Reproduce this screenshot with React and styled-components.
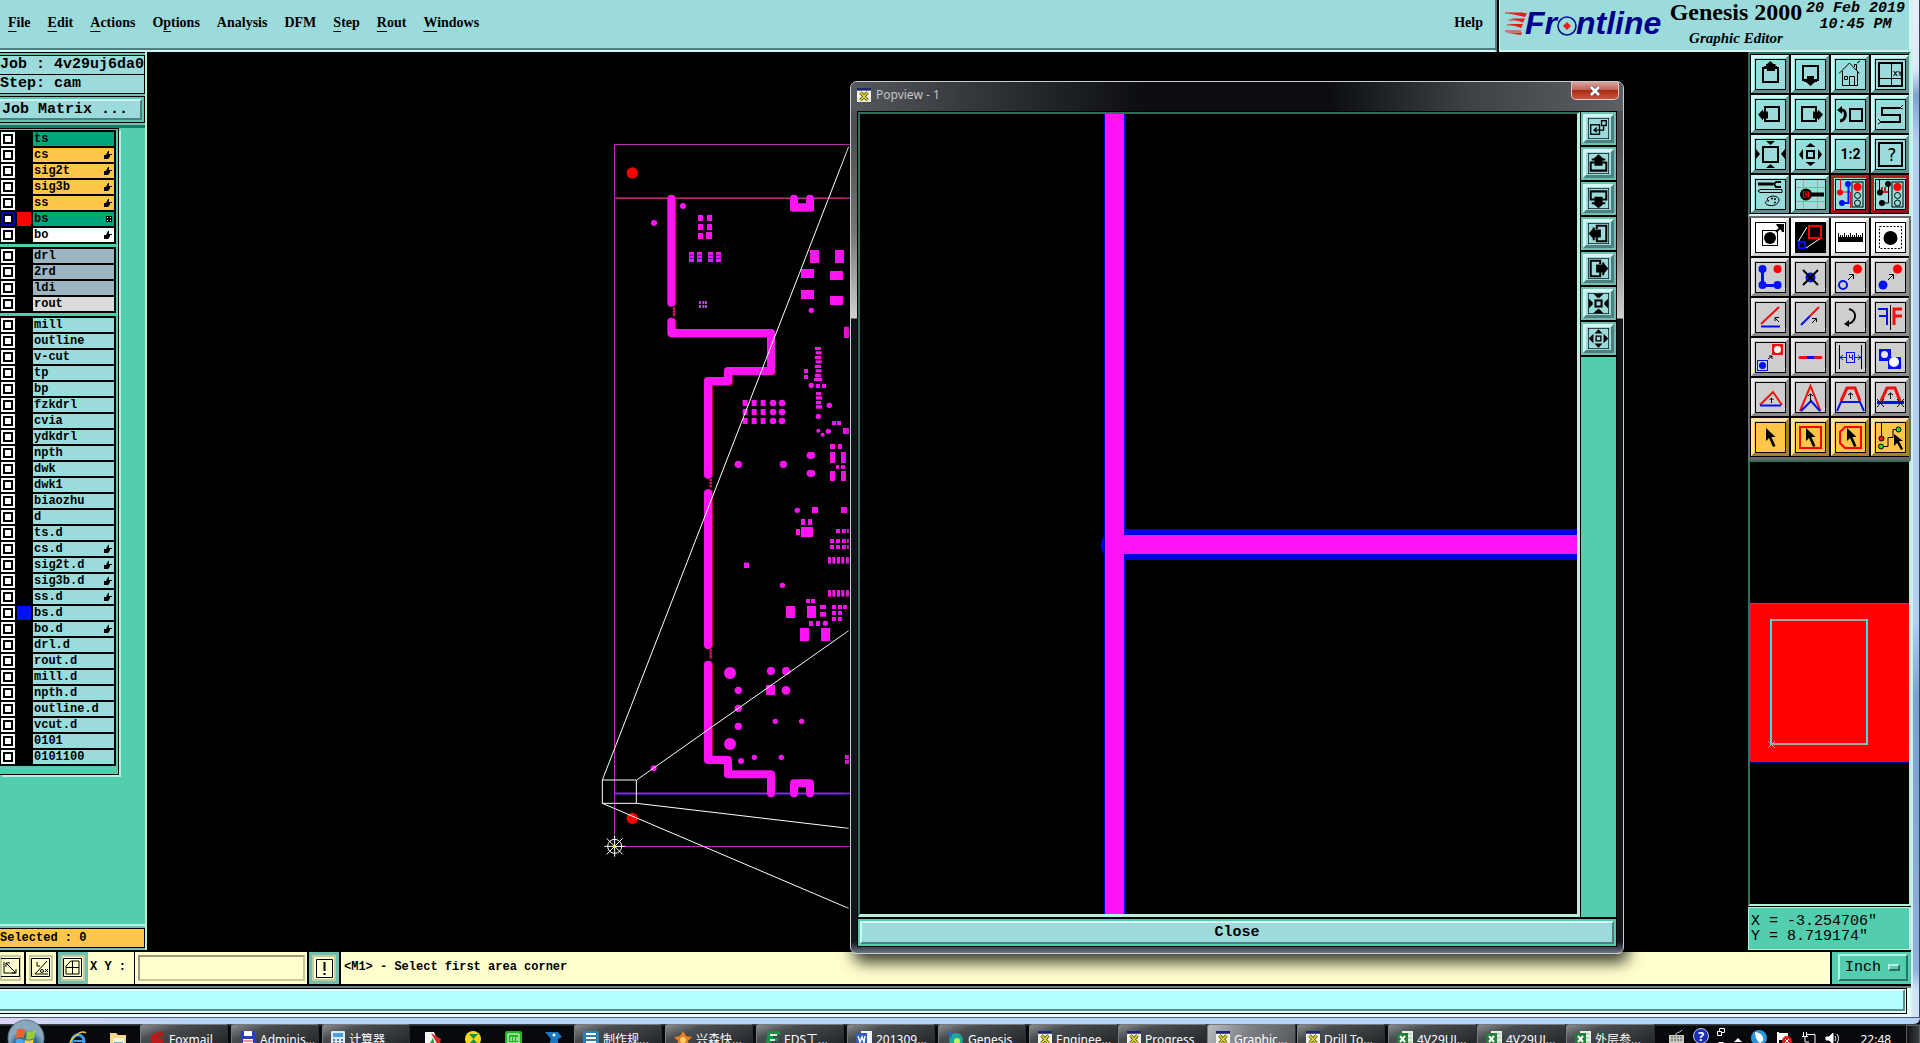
import React from "react";
import styled, { createGlobalStyle, css } from "styled-components";

const c = {
  cyan: "#9cdbdb",
  cyanHi: "#d2f6f3",
  cyanLo: "#4f7f80",
  teal: "#52cdad",
  tealHi: "#b5f0de",
  tealLo: "#2f6f5f",
  cream: "#ffffce",
  amber: "#ffc64a",
  pink: "#ff14f6",
  red: "#ff0000",
  blue: "#0010f8",
};
const mono = '"Liberation Mono", "DejaVu Sans Mono", monospace';
const serif = '"Liberation Serif", "DejaVu Serif", serif';
const ui = '"Noto Sans", "Noto Sans CJK SC", sans-serif';

const Global = createGlobalStyle`
  * { box-sizing: border-box; }
  body { margin: 0; background: #000; }
  button, input, select { font: inherit; color: inherit; margin: 0; padding: 0; border: 0; border-radius: 0; }
  svg { display: block; }
`;

const Screen = styled.div`
  display: flex;
  flex-direction: column;
  height: 100vh;
  overflow: hidden;
  background: #000;
  color: #000;
  font: bold 12px/14px ${mono};
`;
const AppWindow = styled.div`
  flex: 1;
  min-height: 0;
  display: flex;
`;
const Client = styled.div`
  flex: 1;
  min-width: 0;
  display: flex;
  flex-direction: column;
`;
const FrameEdge = styled.div`
  flex: 0 0 9px;
  border-left: 2px solid #d5efea;
  border-right: 1px solid #30465c;
  background: linear-gradient(#e8effc 0, #dce8fa 70px, #7fa2cc 95px, #b3cff2 140px, #b3cff2 620px, #7ba0cf 700px, #8fb1dd 970px, #cfe4fb 990px);
`;
const FrameFoot = styled.div`
  flex: 0 0 7px;
  border-top: 1px solid #557;
  border-radius: 0 0 6px 0;
  background: linear-gradient(90deg, #d9d5f3, #b8d5f5 10%, #b3d6f8);
`;

/* header */
const Header = styled.header`
  flex: 0 0 52px;
  display: flex;
  background: #000;
  font: bold 14px/18px ${serif};
`;
const MenuBar = styled.nav`
  flex: 1;
  display: flex;
  align-items: center;
  gap: 17px;
  padding: 0 12px 4px 8px;
  background: ${c.cyan};
  border-bottom: 2px solid ${c.cyanHi};
  border-right: 2px solid ${c.cyanLo};
  box-shadow: inset 0 -2px ${c.cyanLo};
`;
const MenuItem = styled.button`
  background: none;
  ${(p) => p.$end && "margin-left: auto;"}
  u { text-underline-offset: 4px; text-decoration-thickness: 1px; }
`;
const Brand = styled.div`
  flex: 0 0 409px;
  margin-left: 2px;
  padding: 0 4px 0 5px;
  display: flex;
  background: ${c.cyan};
  border: solid ${c.cyanHi};
  border-width: 0 2px 2px 1px;
`;
const Product = styled.div`
  width: 136px;
  margin-left: 4px;
  text-align: center;
`;
const ProductName = styled.h1`
  margin: 0;
  padding-bottom: 4px;
  font: bold 24px/25px ${serif};
  white-space: nowrap;
`;
const ProductPart = styled.div`
  font-style: italic;
  font-size: 15px;
`;
const Clock = styled.time`
  flex: 1;
  padding: 1px 0 0 2px;
  font: italic bold 15px/16px ${mono};
  text-align: center;
  white-space: nowrap;
`;

/* main area */
const Main = styled.main`
  flex: 1;
  min-height: 0;
  display: flex;
  padding-bottom: 2px;
`;
const SidePanel = styled.aside`
  flex: 0 0 147px;
  display: flex;
  flex-direction: column;
  background: ${c.teal};
  border-right: 2px solid ${c.tealHi};
  overflow: hidden;
`;
const Info = styled.div`
  padding: 2px 0 2px 0;
  background: #6fc0ae;
  border-top: 1px solid #000;
  border-bottom: 3px solid ${c.tealLo};
`;
const InfoLine = styled.div`
  height: 20px;
  margin-bottom: -1px;
  background: ${c.cyan};
  border: solid #000;
  border-width: 1px 1px 1px 0;
  font-size: 15px;
  line-height: 18px;
  white-space: pre;
`;
const MatrixBox = styled.div`
  margin-top: 3px;
  padding: 2px 2px 2px 0;
  background: ${c.teal};
  border: solid #000;
  border-width: 1px 1px 1px 0;
`;
const MatrixButton = styled.button`
  display: block;
  width: 100%;
  height: 21px;
  padding-left: 2px;
  text-align: left;
  background: ${c.cyan};
  border: solid;
  border-width: 2px 2px 2px 0;
  border-color: ${c.cyanHi} ${c.cyanLo} ${c.cyanLo};
  font-size: 15px;
  line-height: 17px;
`;
const LayerPanel = styled.div`
  width: 119px;
  padding: 1px 2px 8px 0;
  display: flex;
  flex-direction: column;
  gap: 3px;
  background: ${c.teal};
  border: solid #000;
  border-width: 1px 1px 1px 0;
  box-shadow: 2px 2px ${c.tealHi};
`;
const LayerGroup = styled.div`
  padding: 2px 2px 0 1px;
  background: #000;
`;
const LayerRow = styled.div`
  display: flex;
  height: 16px;
`;
const LayerCheck = styled.input`
  appearance: none;
  width: 14px;
  height: 14px;
  background: #fff;
  border: 2px solid ${(p) => (p.$work ? "#0000b4" : "#fff")};
  box-shadow: inset 0 0 0 2px #000;
`;
const Swatch = styled.span`
  width: 14px;
  height: 14px;
  margin: 0 2px;
  background: ${(p) => p.$fill || "#000"};
`;
const LayerName = styled.label`
  flex: 1;
  height: 14px;
  padding: 0 2px 0 1px;
  display: flex;
  align-items: center;
  justify-content: space-between;
  line-height: 14px;
  background: ${(p) => p.$fill};
`;
const Selected = styled.div`
  margin-top: auto;
  padding: 2px 0;
  background: #6fc0ae;
  border-top: 2px solid ${c.tealHi};
`;
const SelectedText = styled.output`
  display: block;
  height: 20px;
  line-height: 18px;
  background: ${c.amber};
  border: 1px solid #000;
  border-left: 0;
`;

const Canvas = styled.section`
  position: relative;
  flex: 1;
  min-width: 0;
  overflow: visible;
  > svg { position: absolute; inset: 0; width: 100%; height: 100%; }
`;

/* floating window */
const Popview = styled.section`
  position: absolute;
  z-index: 2;
  left: 703px;
  top: 29px;
  width: 774px;
  height: 873px;
  padding: 0 6px 6px;
  display: flex;
  flex-direction: column;
  border: 1px solid #c8ccd0;
  border-radius: 7px;
  background: linear-gradient(#505459 0, #4b4d50 50px, #777 150px, #d0d0d0 236px, #111418 237px, #12161c 860px, #6c7888);
  box-shadow: 4px 8px 16px rgba(0, 0, 0, 0.8);
`;
const TitleBar = styled.div`
  height: 29px;
  margin: 0 -6px;
  padding: 0 4px 3px 6px;
  display: flex;
  align-items: center;
  gap: 5px;
  border-radius: 6px 6px 0 0;
  background: linear-gradient(90deg, #55585c, #35383c 15%, #0b0d10 38%, #0b0d10 62%, #3e4246 80%, #5c6064);
  color: #c4c6c8;
  font: 12px/18px ${ui};
`;
const TitleClose = styled.button`
  align-self: flex-start;
  margin-left: auto;
  width: 48px;
  height: 18px;
  display: grid;
  place-items: center;
  background: linear-gradient(#d7a49a, #c2665a 45%, #a92c18 50%, #c7553a);
  border: 1px solid #e8c8c0;
  border-top: 0;
  border-radius: 0 0 5px 5px;
`;
const PopBody = styled.div`
  flex: 1;
  display: flex;
  flex-direction: column;
  background: #000;
  border: 1px solid #000;
`;
const PopMain = styled.div`
  flex: 1;
  display: flex;
`;
const PopCanvas = styled.div`
  flex: 1;
  border: solid;
  border-width: 2px 3px 3px 2px;
  border-color: ${c.tealLo} ${c.tealHi} ${c.tealHi} ${c.tealLo};
  svg { width: 100%; height: 100%; }
`;
const PopTools = styled.div`
  width: 35px;
  margin-left: 1px;
  display: flex;
  flex-direction: column;
  background: ${c.teal};
`;
const PopTool = styled.button`
  height: 35px;
  padding: 2px;
  background: #6fc0ae;
  border-bottom: 2px solid #000;
  > span {
    display: grid;
    place-items: center;
    height: 29px;
    background: ${c.cyan};
    border: 3px solid;
    border-color: ${c.cyanHi} ${c.cyanLo} ${c.cyanLo} ${c.cyanHi};
  }
`;
const PopFoot = styled.div`
  padding: 2px;
  margin-top: 2px;
  background: ${c.teal};
`;
const PopClose = styled.button`
  display: block;
  width: 100%;
  height: 23px;
  background: ${c.cyan};
  border: 2px solid;
  border-color: ${c.cyanHi} ${c.cyanLo} ${c.cyanLo} ${c.cyanHi};
  font-size: 15px;
  line-height: 19px;
`;

/* right column */
const RightPanel = styled.aside`
  flex: 0 0 163px;
  display: flex;
  flex-direction: column;
`;
const ToolGrid = styled.div`
  display: grid;
  grid-template-columns: repeat(4, 38px);
  gap: 2px;
  background: #000;
  border: solid;
  ${(p) =>
    p.$edit
      ? css`padding: 0 0 1px 1px; border-width: 2px 2px 3px 2px; border-color: #6a6a6a;`
      : css`padding: 1px 0 1px 1px; border-width: 2px 2px 2px 2px; border-color: ${c.tealLo} ${c.tealHi} ${c.cyanHi} ${c.tealLo};`}
`;
const tones = {
  view: [c.cyan, c.cyanHi, "#5f8f8f"],
  warn: [c.cyan, "#b82020", "#8c1414"],
  mode: ["#ffffff", "#ffffff", "#d0d0d0"],
  edit: ["#cecece", "#ece8e8", "#8c8c8c"],
  pick: [c.amber, "#ffe5a4", "#a88030"],
};
const Tool = styled.button`
  height: 38px;
  display: grid;
  place-items: center;
  background: ${(p) => tones[p.$tone][0]};
  border: 3px solid;
  border-color: ${(p) => {
    const [, hi, lo] = tones[p.$tone];
    return `${hi} ${lo} ${lo} ${hi}`;
  }};
`;
const Overview = styled.div`
  flex: 1;
  display: flex;
  align-items: center;
  background: #000;
  border: 2px solid;
  border-color: ${c.tealLo} ${c.tealHi} ${c.tealHi} ${c.tealLo};
`;
const Coords = styled.output`
  display: block;
  height: 43px;
  margin-top: 1px;
  padding: 6px 2px;
  background: ${c.teal};
  border: solid;
  border-width: 1px 2px 1px 1px;
  border-color: ${c.tealHi};
  font-size: 15px;
  line-height: 15px;
  font-weight: normal;
  white-space: pre;
`;

/* command line */
const CommandBar = styled.form`
  flex: 0 0 33px;
  display: flex;
  gap: 2px;
  border-bottom: 2px solid #000;
  background: #000;
`;
const SnapButton = styled.button`
  width: ${(p) => (p.$first ? 24 : 30)}px;
  display: grid;
  place-items: center;
  background: ${c.cream};
  border: 3px solid ${(p) => (p.$on ? "#6fc0ae" : c.cream)};
  ${(p) => (p.$first ? "border-left: 0;" : "")}
  box-shadow: inset 0 0 0 2px #c9c9a0;
`;
const CoordLabel = styled.label`
  width: 46px;
  margin-left: -2px;
  padding-left: 2px;
  line-height: 31px;
  background: ${c.cream};
  white-space: pre;
`;
const CoordField = styled.span`
  width: 172px;
  padding: 3px 2px 3px 3px;
  background: ${c.cream};
  margin-left: -1px;
`;
const CoordInput = styled.input`
  display: block;
  width: 100%;
  height: 26px;
  padding-left: 4px;
  background: ${c.cream};
  border: 2px solid;
  border-color: #9c9c7c #c9c9a0 #c9c9a0 #9c9c7c;
`;
const Message = styled.output`
  flex: 1;
  padding-left: 3px;
  background: ${c.cream};
  line-height: 31px;
`;
const UnitBox = styled.div`
  width: 79px;
  padding: 2px 3px 2px 6px;
  background: ${c.teal};
  position: relative;
`;
const UnitSelect = styled.select`
  appearance: none;
  width: 100%;
  height: 27px;
  padding-left: 5px;
  background: ${c.teal};
  border: 2px solid;
  border-color: ${c.tealHi} ${c.tealLo} ${c.tealLo} ${c.tealHi};
  font-size: 15px;
  font-weight: normal;
`;
const UnitKnob = styled.span`
  position: absolute;
  right: 11px;
  top: 12px;
  width: 12px;
  height: 7px;
  pointer-events: none;
  background: ${c.teal};
  border: 2px solid;
  border-color: ${c.tealHi} ${c.tealLo} ${c.tealLo} ${c.tealHi};
`;
const Status = styled.div`
  flex: 0 0 31px;
  padding: 2px 4px 0 0;
  background: linear-gradient(#6c7f88 0 2px, #e4fffb 2px);
  border-bottom: 1px solid #e4fffb;
  > div {
    height: 26px;
    border: solid #000;
    border-width: 1px 1px 1px 0;
    padding: 0 1px 2px 0;
    background: #e4fffb;
  }
  p {
    height: 22px;
    margin: 0;
    background: #b3ffff;
    border: solid;
    border-width: 2px 2px 2px 0;
    border-color: #dcffff #5b9090 #5b9090;
  }
`;

/* taskbar */
const Taskbar = styled.footer`
  flex: 0 0 19px;
  min-height: 0;
  display: flex;
  align-items: flex-start;
  background: linear-gradient(#3a4148 0 1px, #07090c 2px);
  color: #fff;
  font: 12px/18px ${ui};
`;
const Orb = styled.button`
  margin: -5px 13px 0 7px;
  width: 38px;
  background: none;
`;
const Quick = styled.button`
  width: 40px;
  padding-top: 7px;
  display: grid;
  place-items: center;
  background: none;
`;
const TaskGroup = styled.div`
  display: flex;
  flex: none;
  margin-right: ${(p) => p.$gap || 3}px;
`;
const Task = styled.button`
  width: ${(p) => (p.$joined ? 89 : 88)}px;
  height: 38px;
  padding: 6px 0 0 8px;
  display: flex;
  align-items: flex-start;
  gap: 4px;
  color: #fff;
  white-space: nowrap;
  overflow: hidden;
  background: ${(p) =>
    p.$active
      ? "linear-gradient(120deg, #b9bcc0, #7d8186 40%, #4f5358)"
      : "linear-gradient(160deg, #8a8d90 0, #4a4d50 14px, #15181b 60px)"};
  border: 1px solid #777b80;
  border-right-color: #2a2d30;
  border-radius: 3px 3px 0 0;
  svg { flex: none; }
`;
const Tray = styled.div`
  margin-left: auto;
  width: 254px;
  padding: 4px 0 0 3px;
  display: flex;
  align-items: flex-start;
  justify-content: space-between;
`;
const TrayTime = styled.time`
  padding: 3px 6px 0 12px;
`;
const ShowDesktop = styled.button`
  width: 14px;
  height: 24px;
  margin-top: -3px;
  background: linear-gradient(90deg, #111, #3a3d40);
  border: 1px solid #5b5f63;
`;

/* ---------- icons: all drawn inside a 31px framed square ---------- */
const K = "#000";
const Frame = ({ children, size = 31, fill = "none", frame = true }) => (
  <svg width={size} height={size} viewBox="0 0 31 31" fill="none" stroke={K} strokeWidth="1">
    {frame && <rect x=".5" y=".5" width="30" height="30" fill={fill} />}
    {children}
  </svg>
);
const S = (p) => <rect strokeWidth="2" {...p} />;
const F = (p) => <path fill={K} stroke="none" {...p} />;
const D = ({ x, y, r = 3, f = K, ...p }) => <circle cx={x} cy={y} r={r} fill={f} stroke="none" {...p} />;
const L = ({ d, s = K, w = 1, ...p }) => <path d={d} stroke={s} strokeWidth={w} {...p} />;
const arrowUp = "M15.500 2l3 3h2v2h1.500v2h-2v3h-8v-3h-3v-2h2v-2h1z";

const I = {
  up: <><S x="8" y="9" width="15" height="14" /><F d={arrowUp} /></>,
  down: <><S x="8" y="7" width="15" height="14" /><F d="M12 17h7v4h3v2h-2l-4.500 4-4.500-4h-2v-2h3z" /></>,
  home: <>
    <L d="M4 14.500L14.500 4l10 10.500M7.500 12v14.500h15V12M14.500 26V17.500h5V26M9.500 17.500h3v3h-3zM19.500 8V5.500h2V11M22 4l3-2" />
  </>,
  layout: <><S x="4" y="4" width="23" height="23" /><L d="M16.500 4v23M4 19.500h23" />
    <text x="18" y="17" fontSize="7" fontFamily="Liberation Sans" fill={K} stroke="none">XY</text></>,
  left: <><S x="10" y="8" width="14" height="14" /><F d="M3 15.500l5-5v2h5v7H8v2z" /></>,
  right: <><S x="7" y="8" width="14" height="14" /><F d="M28 15.500l-5-5v2h-5v7h5v2z" /></>,
  back: <><S x="15" y="10" width="12" height="12" /><L d="M6 11c6-1 6 10-1 11" w="3" /><F d="M2 11l5-4v8z" /></>,
  snake: <><L d="M25 9H7v7h18v7H6" w="2" /><L d="M25 9l3-3M25 9l3 1M6 23l-3-3M6 23l-3 2" /></>,
  fit: <><S x="8" y="8" width="15" height="15" /><F d="M11 2h9l-4.500 4zM11 29h9l-4.500-4zM1 10v10l4-5zM30 10v10l-4-5z" /></>,
  out: <><S x="12" y="12" width="7" height="7" /><F d="M10.500 8h10l-5-4zM10.500 23h10l-5 4zM8 10v11l-4-5.500zM23 10v11l4-5.500z" /></>,
  half: <text x="15.500" y="20" textAnchor="middle" fontSize="14" fontWeight="bold" fontFamily="Roboto" fill={K} stroke="none">1:2</text>,
  help: <><S x="4" y="4" width="23" height="23" />
    <text x="16.500" y="22" textAnchor="middle" fontSize="17" fontWeight="normal" fontFamily="DejaVu Sans Mono" fill={K} stroke="none">?</text></>,
  tools: <><L d="M3 5h15" w="3" /><L d="M26 3h-5l-2 2 2 3h5" w="2" /><path d="M5 10.500h22v3H5l-2-1.500z" />
    <path d="M12 20c2-4 12-4 12 1 0 4-6 7-11 5-4-1-3-5 1-4z" /><D x="17" y="19.500" r="1" /><D x="20" y="20" r="1" /><D x="20" y="23.500" r="1" /></>,
  probe: <><L d="M8.500 1v29M22.500 1v29M1 8.500h29M1 22.500h29" s="#b89a9a" /><L d="M15 15.500h14" w="4" /><D x="11" y="15.500" r="6" />
    <rect x="8.500" y="13" width="5" height="5" stroke="#f00" /><rect x="10.500" y="15" width="1" height="1" stroke="#f00" /></>,
  nets: <><L d="M5.500 0v13h10v16" s="#f00" /><D x="5" y="13.500" f="#f00" /><L d="M13.500 4v20H7" s={c.blue} w="2" /><D x="13" y="5" f={c.blue} /><D x="7" y="24" f={c.blue} />
    <rect x="17" y="3" width="11" height="25" /><D x="22.500" y="8" r="4" f="#f00" /><circle cx="22.500" cy="16.500" r="3" /><circle cx="22.500" cy="24" r="3" /></>,
  nets2: <><L d="M4.500 0v13M13.500 4v20H7" /><L d="M5 13h8M7 8v5M10 8v5" s="#c22" w="2" /><D x="5" y="13.500" /><D x="13" y="5" /><D x="7" y="24" />
    <rect x="17" y="3" width="11" height="25" /><D x="22.500" y="8" r="4" f="#f00" /><circle cx="22.500" cy="16.500" r="3" /><circle cx="22.500" cy="24" r="3" /></>,
  feature: <><rect x="7.500" y="8.500" width="15" height="15" /><D x="15" y="16" r="6" /><L d="M21 10l5-5" w="2" /><F d="M21 2h8v8h-2l-1-2-4-4z" /></>,
  zoom: <><rect x="1" y="1" width="29" height="29" fill={K} stroke="none" /><L d="M3 20l9-15M11 26l15-10" s="#fff" />
    <rect x="14" y="4" width="12" height="12" stroke="#f00" strokeWidth="2" /><rect x="4" y="20" width="6" height="6" stroke={c.blue} strokeWidth="2" /></>,
  ruler: <><F d="M3 15h25v5H3z" /><L d="M3.500 11v5M5.500 13v3M7.500 13v3M9.500 11v5M11.500 13v3M13.500 13v3M15.500 11v5M17.500 13v3M19.500 13v3M21.500 11v5M23.500 13v3M25.500 13v3M27.500 11v5" /></>,
  area: <><rect x="4.500" y="4.500" width="22" height="22" strokeDasharray="2 1.500" /><D x="15.500" y="16" r="7" /></>,
  corners: <><L d="M7.500 7v16.500h15" s={c.blue} w="3" /><D x="7.500" y="7" r="4" f={c.blue} /><D x="7.500" y="23" r="4" f={c.blue} /><D x="22.500" y="23" r="4" f={c.blue} /><D x="22.500" y="7" r="4" f="#f00" /></>,
  cross: <><D x="15.500" y="15.500" r="5" f={c.blue} /><L d="M8 8l15 15M23 8L8 23" w="2" /></>,
  copyPad: <><circle cx="8" cy="23" r="4" stroke={c.blue} strokeWidth="2" /><D x="22.500" y="7" r="4.500" f="#f00" /><L d="M13 18l5-5M14 12.500h4.500V17" /></>,
  movePad: <><D x="8" y="23" r="4.500" f={c.blue} /><D x="22.500" y="7" r="4.500" f="#f00" /><L d="M13 18l5-5M14 12.500h4.500V17" /></>,
  angle: <><L d="M24 5L6 22" s="#f01010" w="2" /><L d="M6 24.500h19" s={c.blue} w="2" /><L d="M24 20l-4-4M20 19v-3.500h4" /></>,
  line: <><L d="M6 23l9-9" s={c.blue} w="2" /><L d="M15 14l9-9" s="#f01010" w="2" /><L d="M17 21l4-4M17 16.500h4.500V20" /></>,
  rotate: <><path d="M14 7c9 2 8 14-3 15" strokeWidth="2" /><F d="M9 22l5-4v7z" /></>,
  mirror: <><L d="M15.500 3v25" /><L d="M3 7h9v16M4 14h8" s={c.blue} w="2" /><L d="M27 7h-8v16M27 14h-8" s="#f01010" w="3" /></>,
  resize: <><rect x="2.500" y="18.500" width="10" height="10" stroke={c.blue} /><D x="7.500" y="23.500" r="3.500" f={c.blue} />
    <rect x="17" y="2" width="11" height="11" fill="#f01010" stroke="none" /><D x="22.500" y="7.500" r="3.500" f="#fff" /><L d="M13 17l4-3M14 14h3v3" /></>,
  seg: <><L d="M5 15.500h21" s="#f01010" w="3" strokeLinecap="round" /><L d="M12 15.500h7" s={c.blue} w="3" /></>,
  width: <><L d="M4.500 3v24M26.500 3v24" /><rect x="11.500" y="10.500" width="8" height="10" stroke={c.blue} />
    <L d="M5 15.500h6M20 15.500h6M8 13l-3 2.500 3 2.500M23 13l3 2.500-3 2.500M14.500 12.500v3h3v-3M17.500 15v3" s={c.blue} /></>,
  merge: <><F d="M4 7h12v8h10v12H13v-8H4z" fill={c.blue} /><D x="9.500" y="12.500" r="3.500" f="#e6e6e6" /><D x="19" y="20" r="5" f="#fff" /></>,
  tri: <><L d="M5 23l13-13 9 13" s="#f01010" w="2" /><L d="M5 23.500h21" s={c.blue} w="2" /><L d="M16.500 21v-5M14.500 18l2-2 2 2" /></>,
  peak: <><L d="M5 29L15.500 4l10 25" s="#f01010" w="2" /><L d="M6 29l10-10 9 10" s={c.blue} w="2" /><L d="M15.500 20v-8M13 14l2.500-2 2.500 2" /></>,
  trap: <><L d="M6 19L12 6h8l5 13" s="#f01010" w="3" /><L d="M2 29l4-9h19l4 9" s={c.blue} w="2" /><L d="M15.500 17v-6M13 13l2.500-2 2.500 2" /></>,
  trapX: <><L d="M6 19L12 6h8l5 13" s="#f01010" w="3" /><L d="M2 20.500h27" s={c.blue} w="3" /><L d="M15.500 17v-6M13 13l2.500-2 2.500 2M2 17l7 8M9 17l-7 8M22 17l7 8M29 17l-7 8" /></>,
  cursor: <F d="M11 6v13l3-3 4 9 2.500-1-4-9h4z" />,
  cursorBox: <><rect x="5" y="5" width="21" height="21" stroke="#f00" strokeWidth="2" /><F d="M11 6v13l3-3 4 9 2.500-1-4-9h4z" /></>,
  cursorPoly: <><path d="M10 5h16v21H10l-5-5V10z" stroke="#f00" strokeWidth="2" /><F d="M12 6v13l3-3 4 9 2.500-1-4-9h4z" /></>,
  cursorNet: <><L d="M6.500 0v15M6 24.500h7v-9h5v-8h4" /><D x="6.500" y="16.500" r="2.500" f="#e11" stroke={K} /><D x="6" y="24.500" r="2.500" f="#2d2" stroke={K} /><D x="23.500" y="7.500" r="2.500" f="#2d2" stroke={K} /><F d="M19 12v12l3-3 4 7 2-1-4-8h4z" /></>,
};
const viewTools = [
  ["up", "Pan up"], ["down", "Pan down"], ["home", "Home"], ["layout", "Layout"],
  ["left", "Pan left"], ["right", "Pan right"], ["back", "Previous view"], ["snake", "Serpentine"],
  ["fit", "Zoom in"], ["out", "Zoom out"], ["half", "Scale"], ["help", "Info"],
  ["tools", "Setup"], ["probe", "Probe"], ["nets", "Net signals", "warn"], ["nets2", "Net compare", "warn"],
];
const editTools = [
  ["feature", "Features", "mode"], ["zoom", "Area zoom", "mode"], ["ruler", "Measure", "mode"], ["area", "Select area", "mode"],
  ["corners", "Add"], ["cross", "Delete"], ["copyPad", "Copy"], ["movePad", "Move"],
  ["angle", "Rotate line"], ["line", "Stretch"], ["rotate", "Rotate"], ["mirror", "Mirror"],
  ["resize", "Resize"], ["seg", "Break"], ["width", "Width"], ["merge", "Merge"],
  ["tri", "Move triple"], ["peak", "Move peak"], ["trap", "Move segment"], ["trapX", "Cut segment"],
  ["cursor", "Pick", "pick"], ["cursorBox", "Pick in box", "pick"], ["cursorPoly", "Pick in polygon", "pick"], ["cursorNet", "Pick net", "pick"],
];

const popIcons = [
  ["View origin", <><S x="4" y="10" width="13" height="14" /><S x="20" y="4" width="7" height="7" /><L d="M23 11v7H10M13 14l-4 4 4 3" w="2" /></>],
  ["Popup pan up", <><L d="M10 14H4v12h23V14h-6" w="3" /><F d="M15.500 2l7 6h3v3h-4v8h-12v-8h-4V8h3z" /></>],
  ["Popup pan down", <><L d="M10 17H4V5h23v12h-6" w="3" /><F d="M15.500 30l7-6h3v-3h-4v-8h-12v8h-4v3h3z" /></>],
  ["Popup pan left", <><L d="M13 9V4h14v23H13v-6" w="3" /><F d="M1 15.500l6-7v-2h3v3h9v12h-9v4H7v-3z" /></>],
  ["Popup pan right", <><L d="M18 9V4H4v23h14v-6" w="3" /><F d="M30 15.500l-6-7v-2h-3v3h-9v12h9v4h3v-3z" /></>],
  ["Popup zoom in", <><S x="11" y="11" width="9" height="9" strokeWidth="3" /><F d="M8 1h15l-6 6h-3zM8 30h15l-6-6h-3zM1 8v15l6-6v-3zM30 8v15l-6-6v-3z" /></>],
  ["Popup zoom out", <><S x="12" y="12" width="7" height="7" /><F d="M15.500 2l6 6h-12zM15.500 29l6-6h-12zM1 15.500l7-7v14zM30 15.500l-7-7v14z" /></>],
];

const Hand = () => (
  <svg width="8" height="8" viewBox="0 0 8 8"><path d="M0 4h2l2-4h1v3h3v1H6v1l-1 2-1 1H0z" fill="#000" /></svg>
);
const Cells = () => (
  <svg width="6" height="6" viewBox="0 0 6 6"><path d="M0 0h6v6H0z" fill="#000" /><path d="M1 1h1v1H1zM4 1h1v1H4zM1 4h1v1H1zM4 4h1v1H4z" fill="#fff" /></svg>
);

const green = "#00a57b";
const slate = "#9cb5c0";
const layers = [
  [["ts", green], ["cs", c.amber, "h"], ["sig2t", c.amber, "h"], ["sig3b", c.amber, "h"], ["ss", c.amber, "h"], ["bs", green, "g", "#f00"], ["bo", "#fff", "h"]],
  [["drl", slate], ["2rd", slate], ["ldi", slate], ["rout", "#dadada"]],
  "mill outline v-cut tp bp fzkdrl cvia ydkdrl npth dwk dwk1 biaozhu d ts.d cs.d sig2t.d sig3b.d ss.d bs.d bo.d drl.d rout.d mill.d npth.d outline.d vcut.d 0101 0101100"
    .split(" ")
    .map((n) => [n, c.cyan, ["cs.d", "sig2t.d", "sig3b.d", "ss.d", "bo.d"].includes(n) ? "h" : "", n === "bs.d" ? c.blue : ""]),
];

/* pads are [x, y, width, height] in thirds of a pixel */
const upperPads = [
  [324, 255, 15, 18], [351, 255, 15, 18], [324, 282, 15, 18], [351, 282, 15, 18], [324, 309, 15, 18], [348, 306, 18, 21],
  [660, 360, 27, 39], [735, 360, 27, 39], [633, 417, 39, 27], [720, 423, 39, 27], [633, 480, 39, 27], [720, 498, 39, 27],
  [675, 651, 18, 9], [677, 664, 18, 9], [675, 678, 18, 9], [677, 691, 18, 9], [675, 705, 18, 9], [677, 718, 18, 9], [675, 732, 18, 9], [672, 744, 24, 9],
  [642, 717, 12, 12], [642, 735, 12, 12], [678, 762, 12, 12], [696, 762, 12, 12], [678, 786, 15, 9], [678, 799, 18, 10], [678, 813, 15, 10], [678, 826, 18, 10],
  [726, 873, 12, 12], [741, 873, 12, 12], [759, 894, 18, 18], [720, 942, 15, 15], [744, 942, 12, 15],
  [720, 966, 15, 33], [753, 966, 15, 33], [738, 1005, 9, 12], [753, 1005, 12, 12], [720, 1023, 15, 30], [753, 1023, 15, 30], [666, 1131, 18, 18], [753, 1131, 18, 18],
  [656, 966, 12, 20], [656, 1020, 12, 20], [762, 590, 15, 34],
];
const upperDots = [[279, 228, 9], [192, 279, 9], [664, 541, 8], [664, 766, 8], [718, 826, 8], [685, 859, 8], [715, 904, 8], [685, 902, 6], [698, 914, 6], [445, 1003, 11], [580, 1003, 11], [660, 976, 10], [666, 976, 10], [660, 1030, 10], [666, 1030, 10], [622, 1141, 8]];
const lowerPads = [
  [633, 87, 12, 18], [654, 87, 12, 18], [618, 117, 12, 18], [633, 111, 36, 30],
  [738, 117, 12, 12], [756, 117, 12, 12], [771, 117, 6, 12],
  [720, 147, 12, 12], [738, 147, 12, 12], [756, 147, 12, 12], [771, 147, 6, 12], [720, 165, 12, 12], [738, 165, 12, 12], [756, 165, 12, 12], [771, 165, 6, 12],
  [714, 201, 9, 20], [727, 201, 9, 20], [741, 201, 9, 20], [754, 201, 9, 20], [768, 201, 9, 20],
  [714, 300, 9, 20], [727, 300, 9, 20], [741, 300, 9, 20], [754, 300, 9, 20], [768, 300, 9, 20],
  [648, 327, 12, 12], [663, 327, 12, 12], [588, 348, 27, 36], [651, 348, 27, 36], [690, 345, 18, 12], [690, 366, 18, 14],
  [726, 345, 12, 12], [744, 345, 12, 12], [759, 345, 12, 12], [726, 363, 12, 12], [744, 363, 12, 12], [726, 381, 12, 12], [744, 381, 12, 12],
  [657, 393, 12, 15], [678, 393, 12, 15], [630, 414, 27, 39], [693, 414, 27, 39], [462, 218, 15, 16], [528, 585, 27, 30], [765, 795, 12, 12], [765, 810, 12, 12],
];
const lowerDots = [[577, 286, 8], [706, 400, 8], [420, 549, 18], [445, 601, 11], [445, 655, 11], [445, 709, 11], [420, 762, 18], [543, 543, 12], [588, 543, 12], [588, 601, 13], [556, 694, 8], [635, 694, 8], [453, 813, 9], [493, 802, 8], [574, 802, 8], [191, 835, 9]];

const Pads = ({ rects, dots }) => (
  <g fill={c.pink}>
    {rects.map(([x, y, w, h], i) => <rect key={i} x={x} y={y} width={w} height={h} />)}
    {dots.map(([x, y, r], i) => <circle key={i} cx={x} cy={y} r={r} />)}
  </g>
);

const Board = () => (
  <svg aria-hidden="true">
    <g transform="translate(-147 -52)">
      <path d="M614.500 846V144.500H1000M614 846.500h400" stroke="#c02fc0" fill="none" />
      <path d="M614 197.500h386" stroke="#2828d8" /><path d="M614 198.500h386" stroke="#b02870" />
      <path d="M614 793.500h386" stroke="#7c2cf4" strokeWidth="2" />
      <g transform="translate(590 130) scale(.33333)">
        <circle cx="127" cy="129" r="17" fill="#f00" />
        <g fill="none" strokeWidth="24" strokeLinecap="round" strokeLinejoin="round">
          <path d="M247 208v308M247 577v34h297v113M546 724H417v32h-60v278M357 1090v455" stroke="#b0002c" />
          <path d="M612 210v24h48v-24" stroke="#e0003c" />
          <g stroke={c.pink}>
            <path d="M244 206v312M244 575v34h299v114H414v30h-60v281M354 1090v455" />
            <path d="M612 206v26h48v-26" />
          </g>
        </g>
        <path d="M600 222h72v21h-72z" fill={c.pink} />
        <Pads rects={upperPads} dots={upperDots} />
        {[466, 493, 520, 549, 576].map((x) => [819, 846, 873].map((y) =>
          x > 540 ? <circle key={x + y} cx={x} cy={y} r="10" fill={c.pink} /> : <rect key={x + y} x={x - 8} y={y - 9} width="15" height="18" fill={c.pink} />
        ))}
        {[297, 321, 354, 378].map((x) => (
          <g key={x}><path d={`M${x} 366h15v30h-15z`} fill={c.pink} /><path d={`M${x} 376h15M${x} 385h15`} stroke="#5010a0" strokeWidth="3" /></g>
        ))}
        <path d="M330 513v21M340 513v21M348 513v21" stroke="#b848d0" strokeWidth="6" strokeDasharray="9 3" />
        <path d="M252 532v28M362 1047v28M362 1558v28" stroke="#f01070" strokeWidth="7" strokeDasharray="7 2" />
      </g>
      <g transform="translate(590 490) scale(.33333)">
        <g fill="none" strokeWidth="24" strokeLinecap="round" strokeLinejoin="round">
          <path d="M357 525v284" stroke="#b0002c" />
          <path d="M354 524v286h60v43h129v57M612 910v-30h48v30" stroke={c.pink} />
        </g>
        <circle cx="127" cy="985" r="17" fill="#f00" />
        <Pads rects={lowerPads} dots={lowerDots} />
        <g stroke="#fff" strokeWidth="3" fill="none">
          <path d="M37 870h102v70H37zM37 870L776 -1030M140 870L776 422M140 940l636 75M37 940l739 315" />
          <circle cx="74" cy="1069" r="21" />
          <path d="M74 1038v62M43 1069h62M50 1045l48 48M98 1045l-48 48" />
        </g>
        <circle cx="74" cy="1069" r="4" fill="#ff0" />
      </g>
    </g>
  </svg>
);

const XIcon = () => (
  <svg width="14" height="14" viewBox="0 0 16 16">
    <path d="M0 0h16v16H0z" fill="#f4f4e4" /><path d="M0 0h16v3H0z" fill="#1c2470" />
    <path d="M4 5l8 9M12 5l-8 9" stroke="#333" strokeWidth="3.500" /><path d="M4 5l8 9M12 5l-8 9" stroke="#e6d820" strokeWidth="2" />
  </svg>
);
const appIcons = {
  x: <XIcon />,
  fox: <svg width="16" height="16"><path d="M9 1C2 2 0 9 3 13s9 4 11-1c1-4-2-6-4-5-3 1-2 4 0 4M8 3l6-3v6z" fill="#c01818" /></svg>,
  disk: <svg width="16" height="16"><path d="M1 0h13l2 2v14H1z" fill="#2a3fc0" /><path d="M4 0h8v5H4zM3 8h10v8H3z" fill="#fff" /><path d="M3 10h10M3 13h10" stroke="#d33" /></svg>,
  calc: <svg width="14" height="16"><rect width="14" height="16" rx="1" fill="#d8e8f4" /><rect x="2" y="2" width="10" height="4" fill="#4aa0e0" /><path d="M3 8v8M7 8v8M11 8v8" stroke="#68808c" strokeWidth="2" strokeDasharray="2 1" /></svg>,
  doc: <svg width="16" height="16"><rect width="16" height="16" fill="#2f7fb4" /><path d="M3 3h10M3 7h10M3 11h10M3 15h10" stroke="#fff" strokeWidth="2" /></svg>,
  star: <svg width="18" height="17" viewBox="0 0 18 17"><path d="M9 0l3 5 6 1-4 4 1 7-6-3-6 3 1-7-4-4 6-1z" fill="#ec7c1c" /><circle cx="9" cy="9" r="3" fill="#ffd070" /></svg>,
  eds: <svg width="15" height="16"><path d="M3 0h12v4H8v3h5v3H7l-2 6H0z" fill="#189048" /><path d="M5 4h7M5 9h5" stroke="#d8f4e0" strokeWidth="2" /></svg>,
  word: <svg width="16" height="16"><rect x="5" width="11" height="16" fill="#eef3fc" /><rect y="2" width="11" height="12" fill="#2f5cb8" /><path d="M2 5l2 6 2-5 2 5 1-6" stroke="#fff" fill="none" strokeWidth="1.500" /></svg>,
  genesis: <svg width="17" height="16"><circle cx="9" cy="9" r="7" fill="#19a89a" /><circle cx="10" cy="10" r="3" fill="#c8f060" /><path d="M0 1l6 1-2 5z" fill="#2868d0" /></svg>,
  excel: <svg width="16" height="16"><rect x="5" width="11" height="16" fill="#e6f2e6" /><path d="M8 3h7M8 7h7M8 11h7" stroke="#9b9" /><rect y="2" width="11" height="12" fill="#208038" /><path d="M3 5l5 6M8 5l-5 6" stroke="#fff" strokeWidth="2" /></svg>,
};
const quickIcons = [
  ["Kingsoft", <svg width="17" height="17"><path d="M0 1h9l7 15H0z" fill="#f2f6ee" /><path d="M6 2l8 14 2-8z" fill="#d8281c" /><path d="M3 16l5-9 2 9z" fill="#1b9040" /></svg>],
  ["360", <svg width="17" height="17"><circle cx="8" cy="8" r="8" fill="#f4d820" /><path d="M4 3h9l-9 10h9z" fill="#189050" /></svg>],
  ["iQIYI", <svg width="17" height="17"><rect width="17" height="17" rx="2" fill="#22b422" /><path d="M3 3h11v9H3zM6 6v4M9 6v4M12 6v4" stroke="#fff" fill="none" /></svg>],
  ["Bird", <svg width="17" height="17"><path d="M0 1h13l4 5-4 2v9H3l3-9z" fill="#1878c8" /><circle cx="9" cy="4" r="1.500" fill="#fff" /></svg>],
];

const Tasks = ({ items, joined, active }) =>
  items.map(([icon, name], i) => (
    <Task key={i} type="button" $joined={joined} $active={active === i}>{appIcons[icon]}{name}</Task>
  ));

const ToolButtons = ({ items, tone }) =>
  items.map(([id, name, t]) => (
    <Tool key={id} type="button" $tone={t || tone} aria-label={name}><Frame>{I[id]}</Frame></Tool>
  ));

const menus = [["", "F", "ile"], ["", "E", "dit"], ["", "A", "ctions"], ["O", "p", "tions"], ["Analysis"], ["DFM"], ["", "S", "tep"], ["", "R", "out"], ["", "W", "indows"]];

export default function App() {
  return (
    <Screen>
      <Global />
      <AppWindow>
        <Client>
          <Header>
            <MenuBar>
              {menus.map(([a, b, d], i) => <MenuItem key={i}>{a}{b && <u>{b}</u>}{d}</MenuItem>)}
              <MenuItem $end>Help</MenuItem>
            </MenuBar>
            <Brand>
              <svg width="159" height="48" role="img" aria-label="Frontline">
                <path d="M2 13h20l-2 4zM6 18.500h14l-2 4zM4 24h14l-2 4zM0 32.500h17l-1 2.500z" fill="#f01818" />
                <path d="M0 13h18M4 20h15M2 25h15M0 31h16" stroke="#f01818" />
                <g fill="#00008c" fontFamily="Liberation Sans" fontWeight="bold" fontStyle="italic" fontSize="32">
                  <text x="20" y="34">Fr</text><text x="71" y="34">ntline</text>
                </g>
                <circle cx="62" cy="26" r="9" fill="none" stroke="#00108c" strokeWidth="1.500" />
                <path d="M62 22l4 4-4 4-4-4z" fill="#f01818" />
              </svg>
              <Product>
                <ProductName>Genesis 2000</ProductName>
                <ProductPart>Graphic Editor</ProductPart>
              </Product>
              <Clock>20 Feb 2019<br />10:45 PM</Clock>
            </Brand>
          </Header>

          <Main>
            <SidePanel>
              <Info>
                <InfoLine>Job : 4v29uj6da0</InfoLine>
                <InfoLine>Step: cam</InfoLine>
                <MatrixBox><MatrixButton>Job Matrix ...</MatrixButton></MatrixBox>
              </Info>
              <LayerPanel>
                {layers.map((group, g) => (
                  <LayerGroup key={g}>
                    {group.map(([name, fill, mark, swatch]) => (
                      <LayerRow key={name}>
                        <LayerCheck type="checkbox" id={`layer-${name}`} $work={name === "bs"} />
                        <Swatch $fill={swatch} />
                        <LayerName htmlFor={`layer-${name}`} $fill={fill}>
                          {name}{mark === "h" && <Hand />}{mark === "g" && <Cells />}
                        </LayerName>
                      </LayerRow>
                    ))}
                  </LayerGroup>
                ))}
              </LayerPanel>
              <Selected><SelectedText>Selected : 0</SelectedText></Selected>
            </SidePanel>

            <Canvas>
              <Board />
              <Popview>
                <TitleBar>
                  <XIcon />Popview - 1
                  <TitleClose aria-label="Close window">
                    <svg width="12" height="10" viewBox="0 0 12 10"><path d="M2 1l8 8M10 1L2 9" stroke="#555" strokeWidth="4" /><path d="M2 1l8 8M10 1L2 9" stroke="#fff" strokeWidth="2.500" /></svg>
                  </TitleClose>
                </TitleBar>
                <PopBody>
                  <PopMain>
                    <PopCanvas>
                      <svg aria-hidden="true">
                        <circle cx="256" cy="431" r="15" fill="#0000e0" />
                        <path d="M244 0h22v2000h-22zM256 415h1600v31H256z" fill="#0000e0" />
                        <path d="M245 0h19v2000h-19zM256 421h1600v19H256z" fill={c.pink} />
                      </svg>
                    </PopCanvas>
                    <PopTools>
                      {popIcons.map(([name, art]) => (
                        <PopTool key={name} aria-label={name}><span><Frame size={21}>{art}</Frame></span></PopTool>
                      ))}
                    </PopTools>
                  </PopMain>
                  <PopFoot><PopClose>Close</PopClose></PopFoot>
                </PopBody>
              </Popview>
            </Canvas>

            <RightPanel>
              <ToolGrid><ToolButtons items={viewTools} tone="view" /></ToolGrid>
              <ToolGrid $edit><ToolButtons items={editTools} tone="edit" /></ToolGrid>
              <Overview>
                <svg width="159" height="160" role="img" aria-label="Overview">
                  <path d="M0 0h160v160H0z" fill="#f00" />
                  <path d="M0 160V.500h160" stroke="#e020a0" fill="none" /><path d="M0 159.500h160" stroke="#0000a0" />
                  <path d="M20 17h98M20 141h98" stroke="#a8a8a0" strokeWidth="2" />
                  <path d="M21 16v126M117 16v126" stroke="#40e0e0" strokeWidth="2" />
                  <path d="M18 138l7 7M25 138l-7 7" stroke="#40e0e0" />
                </svg>
              </Overview>
              <Coords>{'X = -3.254706"\nY = 8.719174"'}</Coords>
            </RightPanel>
          </Main>

          <CommandBar onSubmit={(e) => e.preventDefault()}>
            <SnapButton type="button" $first aria-label="Snap line">
              <svg width="20" height="20" fill="none" stroke="#000"><path d="M0 .500h18.500v18H0M3 4v11h11M5 5l10 10M5 9V5h4M15 11v4h-4" /></svg>
            </SnapButton>
            <SnapButton type="button" aria-label="Snap angle">
              <svg width="20" height="20" fill="none" stroke="#000"><path d="M.500 .500h18v18H.500zM4 16L16 3M4 16h13M6 4v4h3M14 11l3 3M17 11l-3 3" /><circle cx="11" cy="13" r="1.500" /></svg>
            </SnapButton>
            <SnapButton type="button" $on aria-label="Snap grid">
              <svg width="20" height="20" fill="none" stroke="#000"><path d="M.500 .500h18v18H.500zM3 8l5-5h8v13H3zM9.500 3v13M3 9.500h13" /></svg>
            </SnapButton>
            <CoordLabel htmlFor="xy">X Y :</CoordLabel>
            <CoordField><CoordInput id="xy" /></CoordField>
            <SnapButton type="button" $on aria-label="Apply">
              <svg width="17" height="19" fill="none" stroke="#000"><path d="M.500 .500h16v18H.500z" /><path d="M8.500 3v9M8.500 14v2" strokeWidth="2" /></svg>
            </SnapButton>
            <Message>&lt;M1&gt; - Select first area corner</Message>
            <UnitBox>
              <UnitSelect aria-label="Units" defaultValue="Inch"><option>Inch</option><option>MM</option></UnitSelect>
              <UnitKnob />
            </UnitBox>
          </CommandBar>
          <Status><div><p /></div></Status>
        </Client>
        <FrameEdge />
      </AppWindow>
      <FrameFoot />
      <Taskbar>
        <Orb aria-label="Start">
          <svg width="38" height="38" viewBox="0 0 38 38">
            <defs><radialGradient id="orb" cx=".5" cy=".75"><stop offset="0" stopColor="#4fb4e8" /><stop offset=".6" stopColor="#23608f" /><stop offset="1" stopColor="#8aa8bc" /></radialGradient></defs>
            <circle cx="19" cy="19" r="18" fill="url(#orb)" stroke="#5a7890" />
            <path d="M10 11c3-2 6-1 8 0l-1 8c-3-1-5-1-8 1z" fill="#f0602c" /><path d="M20 12c3 1 6 1 9-1l-2 8c-3 2-5 2-8 1z" fill="#98cc3c" />
            <path d="M9 21c3-2 5-1 8 0l-2 7c-2-1-5-1-7 0z" fill="#48a8f0" /><path d="M18 21c3 1 6 1 9-1l-2 8c-3 1-6 1-8 0z" fill="#fcd03c" />
          </svg>
        </Orb>
        <TaskGroup $gap={2}>
          <Quick aria-label="Internet Explorer">
            <svg width="18" height="18"><circle cx="9" cy="10" r="6" fill="none" stroke="#3aa0ec" strokeWidth="3" /><path d="M5 10h10" stroke="#3aa0ec" strokeWidth="2" /><path d="M1 16C-1 8 12-2 17 2" stroke="#f0c840" strokeWidth="1.500" fill="none" /></svg>
          </Quick>
          <Quick aria-label="Explorer">
            <svg width="17" height="16"><path d="M0 1h6l2 2h8v13H0z" fill="#f2dc8c" /><path d="M3 6h11v8H3z" fill="#f8f4dc" /><path d="M4 10h9v6H4z" fill="#58b4dc" /></svg>
          </Quick>
        </TaskGroup>
        <TaskGroup><Tasks items={[["fox", "Foxmail"]]} /></TaskGroup>
        <TaskGroup><Tasks items={[["disk", "Adminis..."]]} /></TaskGroup>
        <TaskGroup><Tasks items={[["calc", "计算器"]]} /></TaskGroup>
        <TaskGroup $gap={1}>{quickIcons.map(([n, art]) => <Quick key={n} aria-label={n}>{art}</Quick>)}</TaskGroup>
        {[["doc", "制作规..."], ["star", "兴森快..."], ["eds", "EDS工..."], ["word", "201309..."], ["genesis", "Genesis"]].map((t) => (
          <TaskGroup key={t[1]}><Tasks items={[t]} /></TaskGroup>
        ))}
        <TaskGroup $gap={1}><Tasks joined active={2} items={[["x", "Enginee..."], ["x", "Progress"], ["x", "Graphic..."]]} /></TaskGroup>
        <TaskGroup><Tasks items={[["x", "Drill To..."]]} /></TaskGroup>
        <TaskGroup><Tasks joined items={[["excel", "4V29UJ..."], ["excel", "4V29UJ..."], ["excel", "外层参..."]]} /></TaskGroup>
        <Tray>
          <svg width="15" height="15"><path d="M0 7h15v8H0z" fill="#c8c8c0" /><path d="M2 9h11M2 12h11" stroke="#444" strokeDasharray="2 1" /><path d="M7 7c0-4 3-1 6-5" stroke="#ccc" fill="none" /></svg>
          <svg width="16" height="16"><circle cx="8" cy="8" r="7.500" fill="#1c2cb8" stroke="#bcd" /><text x="8" y="13" textAnchor="middle" fontSize="13" fontWeight="bold" fill="#fff">?</text></svg>
          <svg width="8" height="18" fill="none" stroke="#fff"><path d="M.500 3.500h4v4h-4zM2.500 3V.500h5v4H5" /><path d="M1 14h6l-3 3z" fill="#fff" stroke="none" /></svg>
          <svg width="8" height="18"><path d="M4 10l4 4H0z" fill="#fff" /></svg>
          <svg width="17" height="18"><circle cx="8" cy="10" r="8" fill="#2c94dc" /><path d="M4 4c7 1 9 5 8 9l-3 2c-3-2-5-6-5-11z" fill="#fff" /></svg>
          <svg width="16" height="18"><path d="M2 4v14" stroke="#fff" strokeWidth="2" /><path d="M3 5h9v7H3z" fill="#fff" /><circle cx="11" cy="13" r="5" fill="#d82020" /><path d="M9 11l4 4M13 11l-4 4" stroke="#fff" /></svg>
          <svg width="15" height="18" fill="none" stroke="#fff"><path d="M2.500 4v5M5.500 4v5M1 8.500h6M4 9v5h4M6 6.500h8v9H8" /></svg>
          <svg width="15" height="18" fill="none" stroke="#fff"><path d="M1 9h3l4-4v11l-4-4H1z" fill="#fff" /><path d="M10 8c1 2 1 3 0 5M12 6c2 3 2 6 0 9" /></svg>
          <TrayTime>22:48</TrayTime>
          <ShowDesktop aria-label="Show desktop" />
        </Tray>
      </Taskbar>
    </Screen>
  );
}
